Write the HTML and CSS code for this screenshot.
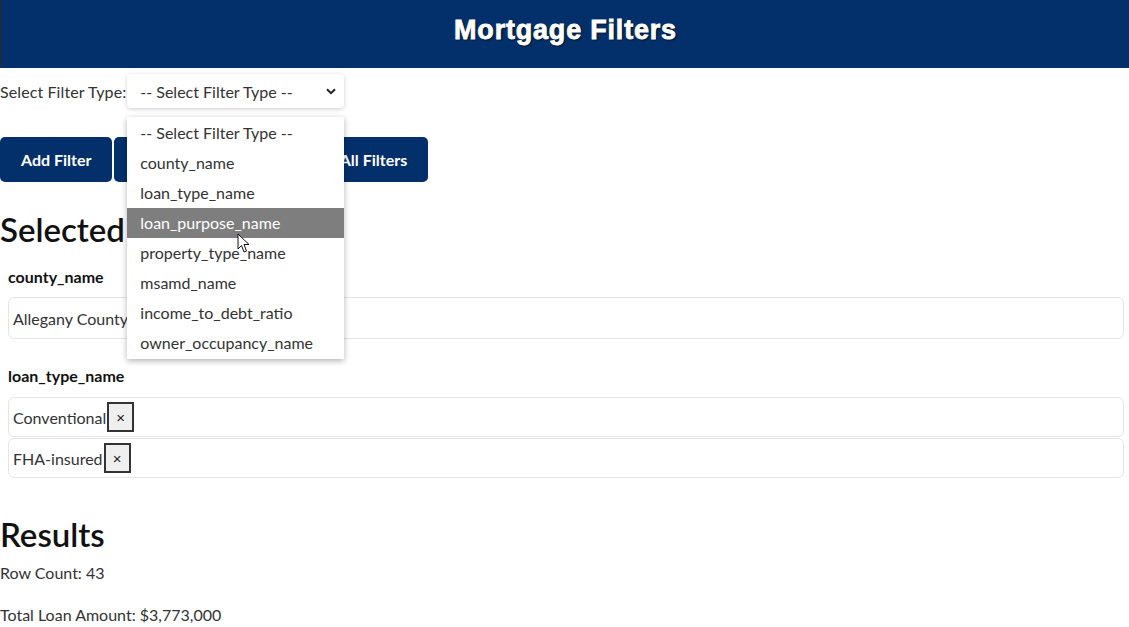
FILE: index.html
```html
<!DOCTYPE html>
<html>
<head>
<meta charset="utf-8">
<link rel="stylesheet" href="styles.css">
</head>
<body>
<header class="topbar"><h1 class="title">Mortgage Filters</h1></header>
<div class="select-row">
  <label class="select-label">Select Filter Type:</label>
  <div class="select-wrap">
    <div class="select-box">
      <span>-- Select Filter Type --</span>
      <svg class="chev" width="10" height="7" viewBox="0 0 10 7"><path d="M1 1.2 L5 5.2 L9 1.2" fill="none" stroke="#222" stroke-width="2"/></svg>
    </div>
    <ul class="dropdown">
      <li class="opt">-- Select Filter Type --</li>
      <li class="opt">county_name</li>
      <li class="opt">loan_type_name</li>
      <li class="opt opt-active">loan_purpose_name</li>
      <li class="opt">property_type_name</li>
      <li class="opt">msamd_name</li>
      <li class="opt">income_to_debt_ratio</li>
      <li class="opt">owner_occupancy_name</li>
    </ul>
    <svg class="cursor" width="14" height="21" viewBox="0 0 14 21"><path d="M1 1 L1 16 L4.5 12.5 L7 19 L9.5 18 L7 11.5 L12 11.5 Z" fill="#fff" stroke="#111" stroke-width="1"/></svg>
  </div>
</div>
<div class="btn-row">
  <button class="btn">Add Filter</button>
  <button class="btn btn-mid">Remove Last Filter</button>
  <button class="btn">Clear All Filters</button>
</div>
<h2 class="section">Selected Filters</h2>
<div class="group">
  <div class="group-label">county_name</div>
  <div class="chip chip-tall">Allegany County<button class="x">×</button></div>
</div>
<div class="group">
  <div class="group-label">loan_type_name</div>
  <div class="chip">Conventional<button class="x">×</button></div>
  <div class="chip">FHA-insured<button class="x">×</button></div>
</div>
<h2 class="section results">Results</h2>
<p class="line">Row Count: 43</p>
<p class="line">Total Loan Amount: $3,773,000</p>
</body>
</html>
```
FILE: styles.css
```css
* { box-sizing: border-box; }
body {
  margin: 0;
  font-family: Lato, "Noto Sans", sans-serif;
  font-size: 16px;
  color: #222;
  background: #fff;
  overflow: hidden;
}
.topbar {
  background: #03306a;
  height: 68px;
  border-left: 2px solid #1a2a40;
  display: flex;
  align-items: center;
  justify-content: center;
  padding-bottom: 8px;
}
.title {
  margin: 0;
  color: #fff;
  font-family: "Liberation Sans", Arial, sans-serif;
  font-weight: 700;
  font-size: 27px;
  text-shadow: 1px 1px 2px #000;
  letter-spacing: 0.8px;
  -webkit-text-stroke: 0.8px #fff;
}
.select-row {
  display: flex;
  align-items: center;
  margin-top: 6px;
  height: 34px;
}
.select-label { margin-right: 1px; color: #333; letter-spacing: 0.1px; }
.select-wrap { position: relative; }
.select-box {
  width: 217px;
  height: 34px;
  border-radius: 4px;
  box-shadow: 0 1px 4px rgba(0,0,0,0.2);
  display: flex;
  align-items: center;
  justify-content: space-between;
  padding: 0 8px 0 13px;
  color: #333;
}
.chev { margin-top: 1px; }
.dropdown {
  position: absolute;
  left: 0;
  top: 43px;
  width: 217px;
  margin: 0;
  padding: 1px 0;
  list-style: none;
  background: #fff;
  box-shadow: 0 2px 6px rgba(0,0,0,0.3);
  z-index: 5;
}
.opt {
  height: 30px;
  line-height: 30px;
  padding-left: 13px;
  color: #333;
}
.opt-active { background: #7e7e7e; color: #fff; }
.cursor {
  position: absolute;
  left: 110px;
  top: 159px;
  z-index: 6;
}
.btn-row {
  display: flex;
  gap: 2px;
  margin-top: 29px;
}
.btn {
  background: #03306a;
  color: #fff;
  border: none;
  border-radius: 5px;
  height: 45px;
  padding: 0 21px;
  font-family: inherit;
  font-size: 16px;
  font-weight: 700;
}
.btn-mid { padding: 0 15px; }
.section {
  margin: 27px 0 0;
  font-size: 33px;
  font-weight: 600;
  line-height: 40px;
  color: #111;
}
.group { margin: 0 5px 0 8px; }
.group-label {
  font-weight: 700;
  margin-top: 16px;
  margin-bottom: 8px;
  line-height: 24px;
  color: #111;
}
.chip {
  display: flex;
  align-items: center;
  border: 1px solid #e4e4e4;
  border-radius: 6px;
  padding: 4px 4px;
  margin-bottom: 1px;
  color: #333;
}
.chip-tall { padding: 5px 4px; margin-bottom: 25px; }
.x {
  width: 27px;
  height: 30px;
  margin-left: 1px;
  border: 2px solid #333;
  background: #efefef;
  font-size: 15px;
  padding: 0;
  color: #222;
}
.group + .group .group-label { margin-bottom: 9px; }
.results { margin-top: 36px; }
.line { margin: 0; line-height: 24px; color: #333; }
.line + .line { margin-top: 18px; }
.results + .line { margin-top: 7px; }
```
